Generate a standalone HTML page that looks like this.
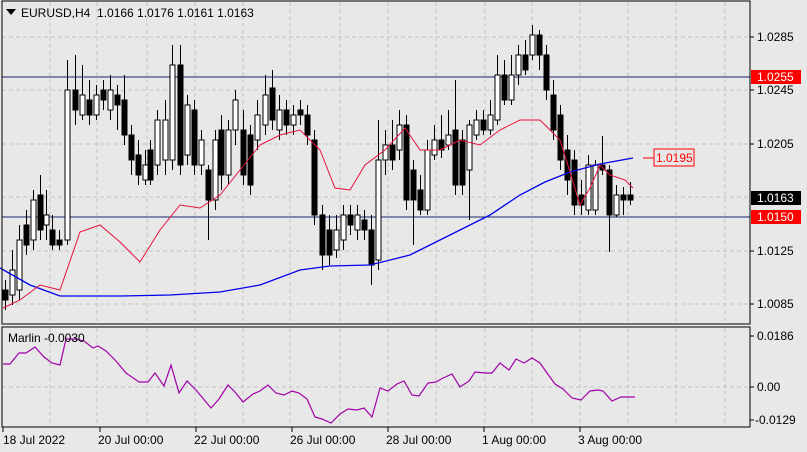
<!DOCTYPE html>
<html><head><style>
body{margin:0;width:807px;height:452px;background:#e8e8e8;overflow:hidden;font-family:"Liberation Sans",sans-serif}
svg{position:absolute;left:0;top:0}
text{font-family:"Liberation Sans",sans-serif;font-size:12px;fill:#000}
</style></head><body>
<svg width="807" height="452">
<g stroke="#c4c4c4" stroke-dasharray="4,3" stroke-width="1">
<line x1="50" y1="2" x2="50" y2="324"/><line x1="97" y1="2" x2="97" y2="324"/><line x1="147" y1="2" x2="147" y2="324"/><line x1="195" y1="2" x2="195" y2="324"/><line x1="243" y1="2" x2="243" y2="324"/><line x1="290" y1="2" x2="290" y2="324"/><line x1="340" y1="2" x2="340" y2="324"/><line x1="388" y1="2" x2="388" y2="324"/><line x1="436" y1="2" x2="436" y2="324"/><line x1="485" y1="2" x2="485" y2="324"/><line x1="532" y1="2" x2="532" y2="324"/><line x1="580" y1="2" x2="580" y2="324"/><line x1="628" y1="2" x2="628" y2="324"/><line x1="676" y1="2" x2="676" y2="324"/><line x1="725" y1="2" x2="725" y2="324"/>
<line x1="50" y1="328" x2="50" y2="427"/><line x1="97" y1="328" x2="97" y2="427"/><line x1="147" y1="328" x2="147" y2="427"/><line x1="195" y1="328" x2="195" y2="427"/><line x1="243" y1="328" x2="243" y2="427"/><line x1="290" y1="328" x2="290" y2="427"/><line x1="340" y1="328" x2="340" y2="427"/><line x1="388" y1="328" x2="388" y2="427"/><line x1="436" y1="328" x2="436" y2="427"/><line x1="485" y1="328" x2="485" y2="427"/><line x1="532" y1="328" x2="532" y2="427"/><line x1="580" y1="328" x2="580" y2="427"/><line x1="628" y1="328" x2="628" y2="427"/><line x1="676" y1="328" x2="676" y2="427"/><line x1="725" y1="328" x2="725" y2="427"/>
<line x1="2" y1="37" x2="750" y2="37"/><line x1="2" y1="90" x2="750" y2="90"/><line x1="2" y1="144" x2="750" y2="144"/><line x1="2" y1="197" x2="750" y2="197"/><line x1="2" y1="251" x2="750" y2="251"/><line x1="2" y1="304" x2="750" y2="304"/>
<line x1="2" y1="387" x2="750" y2="387"/>
</g>
<line x1="2" y1="77" x2="750" y2="77" stroke="#1a2470" stroke-width="1"/>
<line x1="2" y1="217" x2="750" y2="217" stroke="#1a2470" stroke-width="1"/>
<g id="c" stroke="#000" stroke-width="1"></g>
<polyline fill="none" stroke="#0000ee" stroke-width="1.3" points="0,268 30,285 60,296 120,296 170,295 220,292 260,285 300,270 330,266 370,265 410,255 450,235 490,215 520,195 545,182 570,172 600,164 633,158"/>
<polyline fill="none" stroke="#e8103a" stroke-width="1" points="3,308 20,300 40,285 60,290 80,232 100,225 120,242 140,262 160,230 180,205 200,208 220,195 240,170 260,145 280,135 300,130 320,150 335,188 350,190 365,165 385,150 405,128 420,150 440,150 460,140 480,145 500,130 520,120 540,120 560,140 570,172 580,205 590,188 600,165 610,175 625,180 633,188"/>
<polyline fill="none" stroke="#a000a8" stroke-width="1.2" points="3,364 10,364 19,353 26,353 35,347 44,357 52,363 60,365 66,339 75,339 84,341 93,348 98,346 106,351 116,361 126,373 139,382 148,382 155,373 164,386 171,365 179,393 187,381 196,390 211,408 219,399 228,385 235,392 243,402 253,394 260,391 268,385 276,393 284,395 292,391 299,393 307,399 315,417 322,419 331,423 340,414 348,409 357,410 364,408 372,417 380,388 388,391 397,384 404,381 412,395 419,396 428,383 436,382 443,378 452,374 460,387 469,381 475,372 485,373 492,373 500,363 509,370 516,359 524,363 532,358 540,363 547,373 555,384 563,389 572,398 581,400 590,391 598,390 603,391 612,401 621,397 635,397"/>
<rect x="2" y="1" width="748" height="323" fill="none" stroke="#000"/>
<rect x="2" y="327" width="748" height="100" fill="none" stroke="#000"/>
<g fill="#000" stroke="#000"><line x1="750" y1="37" x2="754" y2="37"/><line x1="750" y1="90" x2="754" y2="90"/><line x1="750" y1="144" x2="754" y2="144"/><line x1="750" y1="251" x2="754" y2="251"/><line x1="750" y1="304" x2="754" y2="304"/><line x1="750" y1="336" x2="754" y2="336"/><line x1="750" y1="387" x2="754" y2="387"/><line x1="750" y1="420" x2="754" y2="420"/></g>
<text x="757" y="41">1.0285</text><text x="757" y="94">1.0245</text><text x="757" y="148">1.0205</text><text x="757" y="255">1.0125</text><text x="757" y="308">1.0085</text>
<rect x="751" y="70" width="50" height="14" fill="#f00"/><text x="757" y="81" style="fill:#fff">1.0255</text>
<rect x="751" y="191" width="50" height="14" fill="#000"/><text x="757" y="202" style="fill:#fff">1.0163</text>
<rect x="751" y="210" width="50" height="14" fill="#f00"/><text x="757" y="221" style="fill:#fff">1.0150</text>
<line x1="643" y1="158" x2="654" y2="158" stroke="#f00"/><rect x="654" y="149" width="40" height="17" fill="none" stroke="#f00"/><text x="656" y="162" style="fill:#f00">1.0195</text>
<text x="757" y="340">0.0186</text><text x="757" y="391">0.00</text><text x="755" y="424">-0.0129</text>
<text x="8" y="342">Marlin -0.0030</text>
<polygon points="6,9 16,9 11,15" fill="#000"/>
<text x="21" y="17">EURUSD,H4&#160;&#160;1.0166 1.0176 1.0161 1.0163</text>
<g stroke="#000"><line x1="3" y1="427" x2="3" y2="432"/><line x1="100" y1="427" x2="100" y2="432"/><line x1="196" y1="427" x2="196" y2="432"/><line x1="292" y1="427" x2="292" y2="432"/><line x1="388" y1="427" x2="388" y2="432"/><line x1="484" y1="427" x2="484" y2="432"/><line x1="580" y1="427" x2="580" y2="432"/></g>
<text x="3" y="444">18 Jul 2022</text><text x="98" y="444">20 Jul 00:00</text><text x="194" y="444">22 Jul 00:00</text><text x="290" y="444">26 Jul 00:00</text><text x="386" y="444">28 Jul 00:00</text><text x="482" y="444">1 Aug 00:00</text><text x="578" y="444">3 Aug 00:00</text>
</svg>
<script>
var d=[[5,290,300,0,280,310],[12,270,295,1,250,305],[19,240,290,1,225,300],[26,225,245,0,210,255],[33,200,240,1,190,250],[40,195,230,0,175,240],[46,215,225,1,190,240],[52,230,245,0,215,250],[59,240,245,0,230,250],[67,90,240,1,60,245],[75,90,110,0,55,125],[82,95,115,1,65,120],[89,100,115,0,80,125],[96,95,115,1,85,120],[103,90,100,0,80,110],[110,90,110,1,75,120],[117,95,105,0,85,130],[124,100,135,0,75,145],[131,135,160,0,125,175],[138,155,175,0,140,185],[145,165,180,1,150,185],[150,150,180,0,140,185],[157,120,165,1,110,175],[165,120,160,1,100,175],[172,65,160,1,45,170],[180,65,165,0,45,175],[187,105,155,1,95,165],[194,110,165,0,100,175],[201,140,165,1,130,175],[208,170,200,0,165,240],[215,140,200,1,130,210],[221,130,175,0,115,190],[228,130,175,1,120,185],[235,100,130,1,90,145],[243,130,175,0,110,185],[250,135,185,0,125,195],[257,115,140,1,100,150],[265,95,125,1,75,135],[272,88,120,0,70,130],[279,110,130,1,95,140],[286,110,125,0,100,135],[293,115,125,1,105,135],[300,110,115,0,100,125],[307,115,135,0,105,145],[314,140,215,0,130,225],[322,215,255,0,205,270],[329,230,255,0,215,265],[336,230,250,1,215,258],[343,215,240,1,205,250],[350,215,225,0,205,235],[357,215,230,1,205,240],[364,220,230,0,210,240],[371,230,265,0,215,285],[378,160,260,1,120,270],[385,145,160,1,130,175],[392,145,160,0,120,170],[399,125,150,1,110,160],[406,125,200,0,115,210],[413,170,200,0,160,245],[420,190,210,0,175,215],[427,150,210,1,140,215],[434,140,155,1,125,160],[441,140,150,0,115,158],[448,135,145,1,110,150],[455,130,185,0,80,195],[462,140,185,0,130,195],[469,125,170,1,120,220],[476,120,135,1,110,140],[483,120,130,0,110,135],[490,115,130,1,100,135],[497,75,120,1,55,125],[504,75,100,0,60,105],[511,75,100,1,55,105],[518,55,75,1,45,85],[525,55,70,0,40,75],[532,35,55,1,25,60],[539,35,55,0,30,70],[546,55,90,0,45,100],[553,95,130,0,80,140],[560,115,160,0,105,170],[567,150,180,0,135,195],[574,160,205,0,150,215],[581,195,205,0,180,215],[588,165,210,1,155,215],[595,165,210,1,160,215],[602,165,170,0,136,175],[609,170,215,0,165,252],[616,195,215,1,185,217],[623,195,200,0,187,215],[630,195,200,0,182,205]];
var s='';d.forEach(function(c){s+='<line x1="'+(c[0]+.5)+'" y1="'+c[4]+'" x2="'+(c[0]+.5)+'" y2="'+c[5]+'"/>';s+='<rect x="'+(c[0]-2)+'" y="'+c[1]+'" width="5" height="'+Math.max(1,c[2]-c[1])+'" fill="'+(c[3]?'#fff':'#000')+'"/>';});
document.getElementById('c').innerHTML=s;
</script>
</body></html>
